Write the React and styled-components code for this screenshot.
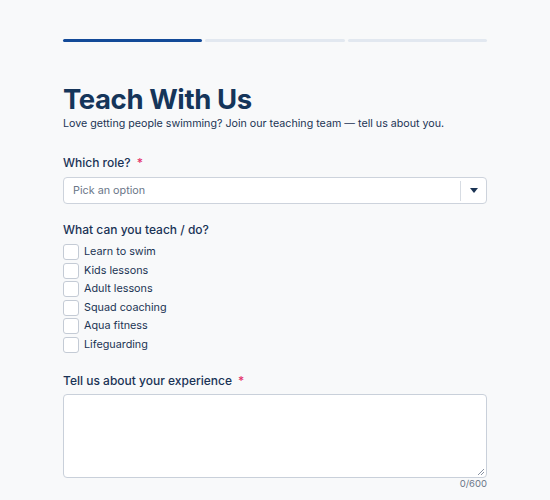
import React from "react";
import styled, { createGlobalStyle } from "styled-components";

const Global = createGlobalStyle`
  html, body { margin: 0; padding: 0; background: #f8f9fa; }
  body { font-family: Inter, "Noto Sans", sans-serif; color: #1b3454; }
  * { box-sizing: border-box; }
`;

const Page = styled.div`
  width: 424px;
  margin: 0 0 0 63px;
  padding-top: 39px;
`;

const Steps = styled.div`
  display: flex;
  gap: 3px;
`;

const Step = styled.div`
  flex: 1;
  height: 3px;
  border-radius: 2px;
  background: ${(p) => (p.$active ? "#134a98" : "#e2e8f0")};
`;

const Title = styled.h1`
  margin: 41px 0 0;
  font-size: 27.5px;
  line-height: 32px;
  font-weight: 700;
  color: #15355a;
  letter-spacing: -0.4px;
`;

const Lead = styled.p`
  margin: 1px 0 0;
  font-size: 10.7px;
  line-height: 16px;
  color: #1b3454;
`;

const Field = styled.div`
  margin-top: ${(p) => p.$top}px;
`;

const Label = styled.div`
  font-size: 12px;
  line-height: 16px;
  font-weight: 500;
  color: #1a3356;
  display: flex;
  align-items: center;
  gap: 6px;
`;

const Req = styled.span`
  color: #e4336c;
  font-size: 12px;
`;

const Select = styled.div`
  margin-top: 6px;
  height: 27px;
  background: #fff;
  border: 1px solid #cdd3dc;
  border-radius: 4px;
  display: flex;
  align-items: center;
`;

const Placeholder = styled.span`
  flex: 1;
  padding-left: 9px;
  font-size: 10.8px;
  color: #6b7688;
`;

const Divider = styled.span`
  width: 1px;
  height: 20px;
  background: #d7dce3;
`;

const Caret = styled.span`
  width: 25px;
  display: flex;
  justify-content: center;
  align-items: center;
`;

const Checks = styled.div`
  margin-top: 6px;
  display: flex;
  flex-direction: column;
  gap: 2.6px;
`;

const CheckRow = styled.label`
  display: flex;
  align-items: center;
  gap: 5px;
  font-size: 10.8px;
  line-height: 16px;
  color: #1b3454;
`;

const Box = styled.span`
  width: 16px;
  height: 16px;
  border: 1px solid #c4cbd5;
  border-radius: 3px;
  background: #fff;
`;

const Area = styled.div`
  margin-top: 5px;
  height: 84px;
  background: #fff;
  border: 1px solid #c9d0da;
  border-radius: 4px;
  position: relative;
`;

const Grip = styled.svg`
  position: absolute;
  right: 1px;
  bottom: 1px;
`;

const Count = styled.div`
  text-align: right;
  font-size: 9.5px;
  line-height: 12px;
  margin-top: 0;
  color: #6b7688;
`;

const options = [
  "Learn to swim",
  "Kids lessons",
  "Adult lessons",
  "Squad coaching",
  "Aqua fitness",
  "Lifeguarding",
];

export default function App() {
  return (
    <>
      <Global />
      <Page>
        <Steps>
          <Step $active />
          <Step />
          <Step />
        </Steps>
        <Title>Teach With Us</Title>
        <Lead>Love getting people swimming? Join our teaching team — tell us about you.</Lead>

        <Field $top={23}>
          <Label>
            Which role? <Req>*</Req>
          </Label>
          <Select>
            <Placeholder>Pick an option</Placeholder>
            <Divider />
            <Caret>
              <svg width="8" height="5" viewBox="0 0 8 5">
                <path d="M0 0h8L4 5z" fill="#1b3454" />
              </svg>
            </Caret>
          </Select>
        </Field>

        <Field $top={18}>
          <Label>What can you teach / do?</Label>
          <Checks>
            {options.map((o) => (
              <CheckRow key={o}>
                <Box />
                {o}
              </CheckRow>
            ))}
          </Checks>
        </Field>

        <Field $top={20}>
          <Label>
            Tell us about your experience <Req>*</Req>
          </Label>
          <Area>
            <Grip width="8" height="8" viewBox="0 0 8 8">
              <path d="M7 1L1 7M7 4L4 7" stroke="#8a94a3" strokeWidth="1" />
            </Grip>
          </Area>
          <Count>0/600</Count>
        </Field>
      </Page>
    </>
  );
}
